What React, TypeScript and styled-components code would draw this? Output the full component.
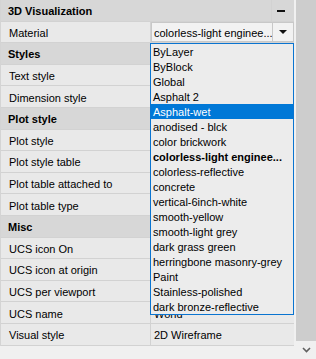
import styled, { createGlobalStyle } from 'styled-components';

const GlobalStyle = createGlobalStyle`
  html, body {
    margin: 0;
    padding: 0;
    background: #f0f0f0;
  }
  body {
    font-family: "Liberation Sans", Arial, sans-serif;
    font-size: 11px;
    color: #000;
  }
`;

const Panel = styled.div`
  width: 316px;
  height: 359px;
  display: flex;
  overflow: hidden;
  background: #f0f0f0;
`;

const Grid = styled.div`
  width: 294px;
  display: flex;
  flex-direction: column;
  align-self: flex-start;
  border-left: 1px solid #d4d4d4;
  box-sizing: border-box;
`;

const Row = styled.div<{ $header?: boolean }>`
  height: 21.6px;
  box-sizing: border-box;
  display: grid;
  grid-template-columns: ${(p) => (p.$header ? '1fr auto' : '149px 1fr')};
  column-gap: 1px;
  background: #d2d2d2;
  border-bottom: 1px solid #d2d2d2;
`;

const Cell = styled.div<{ $header?: boolean }>`
  position: relative;
  display: flex;
  align-items: center;
  padding: 2px 0 0 ${(p) => (p.$header ? '7px' : '8px')};
  background: ${(p) => (p.$header ? '#d7d7d7' : '#e9e9e9')};
  font-weight: ${(p) => (p.$header ? 'bold' : 'normal')};
  white-space: nowrap;
`;

const ValueCell = styled(Cell)`
  padding-left: 3px;
`;

const Collapse = styled.div`
  display: flex;
  align-items: center;
  justify-content: center;
  width: 22px;
  background: #d7d7d7;
  &::after {
    content: '';
    width: 8px;
    height: 2px;
    background: #111;
    margin: 2px 4px 0 0;
  }
`;

const Combo = styled.div`
  position: absolute;
  inset: 0;
  display: flex;
  background: #f2f2f2;
  border: 1px solid #c8c8c8;
  box-sizing: border-box;
`;

const ComboText = styled.div`
  flex: 1;
  display: flex;
  align-items: center;
  padding: 2px 0 0 2px;
  overflow: hidden;
  white-space: nowrap;
`;

const ComboButton = styled.div`
  width: 20px;
  display: flex;
  align-items: center;
  justify-content: center;
  border-left: 1px solid #c8c8c8;
  &::after {
    content: '';
    margin-top: 1px;
    border-left: 4px solid transparent;
    border-right: 4px solid transparent;
    border-top: 4px solid #111;
  }
`;

const List = styled.div`
  position: absolute;
  top: calc(100% + 1px);
  left: -1px;
  width: 144px;
  box-sizing: border-box;
  border: 1px solid #0a74d0;
  background: #ececec;
  z-index: 2;
`;

const Item = styled.div<{ $selected?: boolean; $bold?: boolean }>`
  height: 15px;
  box-sizing: border-box;
  padding: 2px 0 0 2px;
  line-height: 13px;
  overflow: hidden;
  white-space: nowrap;
  background: ${(p) => (p.$selected ? '#0078d7' : 'transparent')};
  color: ${(p) => (p.$selected ? '#fff' : '#000')};
  font-weight: ${(p) => (p.$bold ? 'bold' : 'normal')};
`;

const Scrollbar = styled.div`
  margin-left: 2px;
  width: 20px;
  height: 359px;
  display: flex;
  flex-direction: column;
`;

const Thumb = styled.div`
  height: 341px;
  background: #cdcdcd;
`;

const ArrowDown = styled.div`
  flex: 1;
  display: flex;
  align-items: center;
  justify-content: center;
`;

type RowData = { name: string; header?: boolean; value?: string };

const rows: RowData[] = [
  { name: '3D Visualization', header: true },
  { name: 'Material' },
  { name: 'Styles', header: true },
  { name: 'Text style' },
  { name: 'Dimension style' },
  { name: 'Plot style', header: true },
  { name: 'Plot style' },
  { name: 'Plot style table' },
  { name: 'Plot table attached to' },
  { name: 'Plot table type' },
  { name: 'Misc', header: true },
  { name: 'UCS icon On' },
  { name: 'UCS icon at origin' },
  { name: 'UCS per viewport' },
  { name: 'UCS name', value: 'World' },
  { name: 'Visual style', value: '2D Wireframe' },
];

const current = 'colorless-light enginee...';

const materials = [
  'ByLayer',
  'ByBlock',
  'Global',
  'Asphalt 2',
  'Asphalt-wet',
  'anodised - blck',
  'color brickwork',
  current,
  'colorless-reflective',
  'concrete',
  'vertical-6inch-white',
  'smooth-yellow',
  'smooth-light grey',
  'dark grass green',
  'herringbone masonry-grey',
  'Paint',
  'Stainless-polished',
  'dark bronze-reflective',
];

const MaterialValue = () => (
  <>
    <Combo>
      <ComboText>{current}</ComboText>
      <ComboButton />
    </Combo>
    <List>
      {materials.map((m) => (
        <Item key={m} $selected={m === 'Asphalt-wet'} $bold={m === current}>
          {m}
        </Item>
      ))}
    </List>
  </>
);

const App = () => (
  <>
    <GlobalStyle />
    <Panel>
      <Grid>
        {rows.map((r, i) =>
          r.header ? (
            <Row key={i} $header>
              <Cell $header>{r.name}</Cell>
              {i === 0 ? <Collapse /> : <Cell $header />}
            </Row>
          ) : (
            <Row key={i}>
              <Cell>{r.name}</Cell>
              <ValueCell style={{ zIndex: r.name === 'Material' ? 3 : undefined }}>
                {r.name === 'Material' ? <MaterialValue /> : r.value}
              </ValueCell>
            </Row>
          ),
        )}
      </Grid>
      <Scrollbar>
        <Thumb />
        <ArrowDown>
          <svg width="9" height="6" viewBox="0 0 9 6">
            <path d="M1 1 L4.5 4.5 L8 1" fill="none" stroke="#606060" strokeWidth="1.6" />
          </svg>
        </ArrowDown>
      </Scrollbar>
    </Panel>
  </>
);

export default App;
